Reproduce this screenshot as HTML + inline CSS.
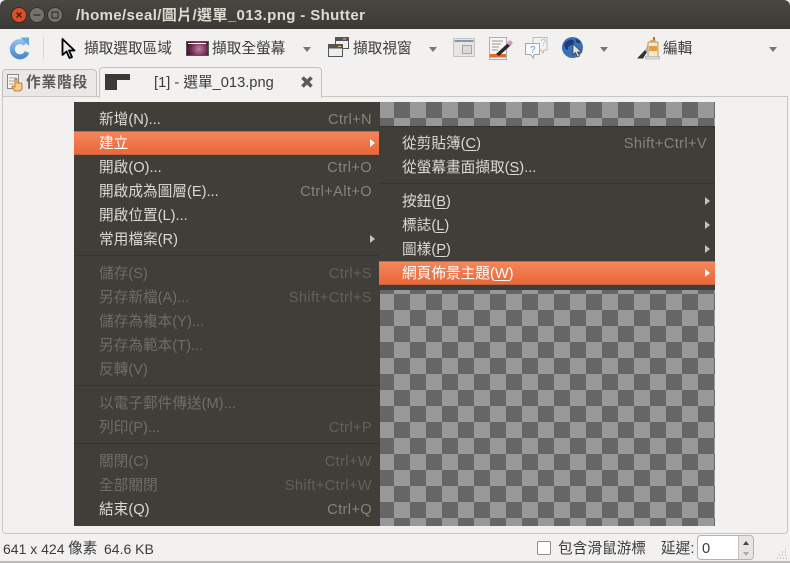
<!DOCTYPE html>
<html><head><meta charset="utf-8">
<style>
html,body{margin:0;padding:0;width:790px;height:563px;overflow:hidden;background:#f2f1f0}
body{position:relative;font-family:"Liberation Sans","WenQuanYi Zen Hei","Noto Sans CJK TC",sans-serif;font-size:14.67px;color:#3c3c3c}
.a{position:absolute;white-space:nowrap}
.tb{top:40px;line-height:18px;color:#3c3c3c}
.menu{background:#403e38;position:absolute}
.r{position:absolute;left:0;right:0;height:24px;line-height:26px;color:#dcd9d3;white-space:nowrap}
.r b{font-weight:normal;position:absolute;left:25px}
.r i{font-style:normal;position:absolute;right:8px;color:#85827b;letter-spacing:.35px}
.d b{color:#6f6c66}.d i{color:#63605a}
.h{background:linear-gradient(#f7855a,#e8683a);border-top:1px solid #c8623a;border-bottom:1px solid #c8623a;box-sizing:border-box;color:#fff}
.h b{color:#fff}
.ar{position:absolute;width:0;height:0;border-left:5px solid #c5c2bc;border-top:4px solid transparent;border-bottom:4px solid transparent;top:8px;right:5px}
.h .ar{border-left-color:#fff;top:7px}
.sep{position:absolute;left:0;right:0;height:1px;background:#36342f}
.dn{position:absolute;width:0;height:0;border-top:5px solid #777;border-left:4px solid transparent;border-right:4px solid transparent}
u{text-underline-offset:2px}
</style></head><body>

<!-- titlebar -->
<div class="a" style="left:0;top:0;width:790px;height:29px;background:linear-gradient(#494741,#3b3a35);border-radius:6px 6px 0 0"></div>
<svg class="a" style="left:10px;top:6px" width="56" height="18">
<circle cx="9" cy="9" r="7.5" fill="#d9502a" stroke="#4b2517"/><path d="M6.500 6.500l5 5M11.500 6.500l-5 5" stroke="#4a1a0c" stroke-width="1.400"/>
<circle cx="27" cy="9" r="7.500" fill="#74726a" stroke="#33322d"/><path d="M23.500 9h7" stroke="#33322d" stroke-width="1.400"/>
<circle cx="45" cy="9" r="7.500" fill="#74726a" stroke="#33322d"/><rect x="42" y="6" width="6" height="6" fill="none" stroke="#33322d" stroke-width="1.200"/>
</svg>
<div class="a" style="left:76px;top:6px;font-size:15px;line-height:19px;color:#dfdbd2;font-weight:bold;letter-spacing:.37px">/home/seal/圖片/選單_013.png - Shutter</div>

<!-- toolbar -->
<svg class="a" style="left:9px;top:36px" width="22" height="24" viewBox="0 0 22 24">
<defs><linearGradient id="g" x1="0" y1="0" x2="0" y2="1"><stop offset="0" stop-color="#8fbce8"/><stop offset="1" stop-color="#4a8ad0"/></linearGradient></defs>
<path d="M16.500 8A7.600 7.600 0 1 0 18 16" fill="none" stroke="url(#g)" stroke-width="5"/>
<path d="M11.500 1.500l8.500 0 0 8.500z" fill="#6aa5df"/>
</svg>
<div class="a" style="left:43px;top:37px;width:1px;height:22px;background:#d8d6d3"></div>
<svg class="a" style="left:61px;top:38px" width="16" height="22" viewBox="0 0 16 22">
<path d="M1.500 1v16l4-3.500 3 6.500 2.500-1-3-6.500h5.500z" fill="#e8e8e8" stroke="#000" stroke-width="1.800" stroke-linejoin="round"/>
</svg>
<div class="a tb" style="left:84px">擷取選取區域</div>
<div class="a" style="left:186px;top:41px;width:21px;height:13px;background:radial-gradient(circle at 12px 7px,#c080a0,#6b2a4c 60%,#2a1020);border:1px solid #555"></div>
<div class="a" style="left:188px;top:43px;width:18px;height:1px;background:#fff"></div>
<div class="a tb" style="left:212px">擷取全螢幕</div>
<div class="dn" style="left:303px;top:47px"></div>
<svg class="a" style="left:327px;top:36px" width="23" height="22" viewBox="0 0 23 22">
<rect x="8.500" y="1.500" width="13" height="11" fill="#eee" stroke="#555"/><rect x="8.500" y="1.500" width="13" height="3.500" fill="#555"/>
<rect x="1.500" y="8.500" width="14" height="12" fill="#eee" stroke="#555"/><rect x="1.500" y="8.500" width="14" height="4" fill="#555"/>
<path d="M11 10.500h3M16 3h3" stroke="#e8c060"/>
</svg>
<div class="a tb" style="left:353px">擷取視窗</div>
<div class="dn" style="left:429px;top:47px"></div>
<svg class="a" style="left:453px;top:38px" width="22" height="19" viewBox="0 0 22 19">
<rect x=".5" y=".5" width="21" height="18" rx="1" fill="#e6e5e2" stroke="#c4c3c0"/>
<rect x="1.500" y="2" width="19" height="2" fill="#7f97b8"/>
<rect x="9.500" y="7.500" width="9" height="8" fill="#dcdbd8" stroke="#a5a5a3"/>
</svg>
<svg class="a" style="left:489px;top:37px" width="24" height="23" viewBox="0 0 24 23">
<rect x=".5" y=".5" width="17" height="22" fill="#f6f5f2" stroke="#b0aea8"/>
<path d="M3 4h11M3 7h9M3 10h7M3 13h6" stroke="#777" stroke-width=".8"/>
<rect x="1" y="17" width="16" height="3.500" fill="#e8662e"/>
<path d="M7 17L19 6l2.500 2.500L10 19z" fill="#2a2a28"/>
<circle cx="21" cy="6" r="2.500" fill="#d89ac4"/>
</svg>
<svg class="a" style="left:525px;top:37px" width="23" height="22" viewBox="0 0 23 22">
<path d="M8 .5h14v12.500h-3l-1 3-2-3H8z" fill="#f2f2f0" stroke="#bdbcb8"/>
<path d="M.5 6.500h14v11H9l-.5 3.500-3-3.500h-5z" fill="#fbfbfa" stroke="#a9a8a4"/>
<text x="5" y="16" font-size="10" fill="#5b9bd9" font-family="Liberation Sans">?</text>
<text x="15.500" y="9" font-size="10" fill="#9cc3e8" font-family="Liberation Sans">?</text>
</svg>
<svg class="a" style="left:561px;top:36px" width="24" height="24" viewBox="0 0 24 24">
<circle cx="11.500" cy="11.500" r="10.500" fill="#3a70b8"/>
<path d="M3 8q5-6 9-4 3 2-1 5-5 1-4 5-3 0-4-6zM14 14q4-2 6 0-2 5-5 5zM14 3q4 0 6 4l-4 0z" fill="#1a3f78"/>
<path d="M12 8v11l2.500-2.500 2 4.500 2-1-2-4h4z" fill="#e2e2e2" stroke="#444" stroke-width=".8"/>
</svg>
<div class="dn" style="left:600px;top:47px"></div>
<svg class="a" style="left:636px;top:36px" width="24" height="24" viewBox="0 0 24 24">
<path d="M1 22.500L9 14l2 2-4 6.500z" fill="#333"/><path d="M9 14l3-6 1 1-2 7z" fill="#bbb"/>
<rect x="12" y="6" width="10" height="15" rx="1" fill="#efe8d8" stroke="#b59a60"/>
<rect x="13" y="10" width="8" height="5" fill="#ee9a3c"/>
<path d="M13 6l2-2h4l2 2z" fill="#d9a040"/>
<rect x="9.500" y="20.500" width="14" height="2.500" fill="#ddd" stroke="#999" stroke-width=".5"/>
<path d="M18 4V1" stroke="#c8662e" stroke-width="2"/>
</svg>
<div class="a tb" style="left:663px">編輯</div>
<div class="dn" style="left:769px;top:47px"></div>

<!-- tabs -->
<div class="a" style="left:2px;top:69px;width:95px;height:28px;background:#e9e8e6;border:1px solid #c4c2be;border-bottom:0;border-radius:4px 4px 0 0;box-sizing:border-box"></div>
<svg class="a" style="left:7px;top:74px" width="18" height="18" viewBox="0 0 18 18">
<rect x=".5" y=".5" width="11" height="14" fill="#f4f3f0" stroke="#8a8986"/>
<path d="M2 4h8M2 7h8M2 10h5" stroke="#aaa"/>
<path d="M8 9v-4l2 0v4h4q1 0 1 2v4l-2 2h-5l-3-4 1-1 2 1z" fill="#f5d08a" stroke="#c8762a"/>
</svg>
<div class="a" style="left:26px;top:74px;font-weight:bold;font-size:14.67px;line-height:19px;color:#5b5a57;letter-spacing:.9px">作業階段</div>
<div class="a" style="left:2px;top:96px;width:786px;height:438px;background:#f2f1f0;border:1px solid #c9c7c3;border-radius:0 0 4px 4px;box-sizing:border-box"></div>
<div class="a" style="left:99px;top:67px;width:223px;height:31px;background:#f2f1f0;border:1px solid #c4c2be;border-bottom:0;border-radius:4px 4px 0 0;box-sizing:border-box"></div>
<div class="a" style="left:105px;top:74px;width:25px;height:6px;background:#3c3a35"></div>
<div class="a" style="left:105px;top:74px;width:12px;height:16px;background:#3c3a35"></div>
<div class="a" style="left:154px;top:74px;line-height:19px;color:#3c3c3c">[1] - 選單_013.png</div>
<svg class="a" style="left:300px;top:75px" width="14" height="14" viewBox="0 0 14 14"><path d="M2.500 2.500l9 9M11.500 2.500l-9 9" stroke="#5a5a58" stroke-width="3.600"/></svg>

<!-- canvas -->
<div class="a" style="left:74px;top:102px;width:641px;height:424px;background-color:#666;background-image:conic-gradient(#999 25%,#666 0 50%,#999 0 75%,#666 0);background-size:32px 32px;background-position:0 0"></div>

<!-- main menu -->
<div class="menu" style="left:74px;top:102px;width:306px;height:424px">
<div class="r" style="top:5px"><b>新增(N)...</b><i>Ctrl+N</i></div>
<div class="r h" style="top:29px;line-height:24px"><b>建立</b><span class="ar"></span></div>
<div class="r" style="top:53px"><b>開啟(O)...</b><i>Ctrl+O</i></div>
<div class="r" style="top:77px"><b>開啟成為圖層(E)...</b><i>Ctrl+Alt+O</i></div>
<div class="r" style="top:101px"><b>開啟位置(L)...</b></div>
<div class="r" style="top:125px"><b>常用檔案(R)</b><span class="ar"></span></div>
<div class="sep" style="top:153px"></div>
<div class="r d" style="top:159px"><b>儲存(S)</b><i>Ctrl+S</i></div>
<div class="r d" style="top:183px"><b>另存新檔(A)...</b><i>Shift+Ctrl+S</i></div>
<div class="r d" style="top:207px"><b>儲存為複本(Y)...</b></div>
<div class="r d" style="top:231px"><b>另存為範本(T)...</b></div>
<div class="r d" style="top:255px"><b>反轉(V)</b></div>
<div class="sep" style="top:283px"></div>
<div class="r d" style="top:289px"><b>以電子郵件傳送(M)...</b></div>
<div class="r d" style="top:313px"><b>列印(P)...</b><i>Ctrl+P</i></div>
<div class="sep" style="top:341px"></div>
<div class="r d" style="top:347px"><b>關閉(C)</b><i>Ctrl+W</i></div>
<div class="r d" style="top:371px"><b>全部關閉</b><i>Shift+Ctrl+W</i></div>
<div class="r" style="top:395px"><b>結束(Q)</b><i>Ctrl+Q</i></div>
</div>

<!-- sub menu -->
<div class="menu" style="left:379px;top:126px;width:336px;height:164px;border-top:1px solid #33312c;box-sizing:border-box">
<div class="r" style="top:4px"><b style="left:23px">從剪貼簿(<u>C</u>)</b><i>Shift+Ctrl+V</i></div>
<div class="r" style="top:28px"><b style="left:23px">從螢幕畫面擷取(<u>S</u>)...</b></div>
<div class="sep" style="top:56px"></div>
<div class="r" style="top:62px"><b style="left:23px">按鈕(<u>B</u>)</b><span class="ar"></span></div>
<div class="r" style="top:86px"><b style="left:23px">標誌(<u>L</u>)</b><span class="ar"></span></div>
<div class="r" style="top:110px"><b style="left:23px">圖樣(<u>P</u>)</b><span class="ar"></span></div>
<div class="r h" style="top:134px;line-height:24px"><b style="left:23px">網頁佈景主題(<u>W</u>)</b><span class="ar"></span></div>
</div>

<!-- status bar -->
<div class="a" style="left:3px;top:540px;line-height:18px;font-size:14px">641 x 424</div>
<div class="a" style="left:68px;top:540px;line-height:18px">像素</div>
<div class="a" style="left:104px;top:540px;line-height:18px;font-size:14px">64.6 KB</div>
<div class="a" style="left:537px;top:541px;width:12px;height:12px;background:#fff;border:1px solid #8f8e8a;border-radius:2px"></div>
<div class="a" style="left:558px;top:540px;line-height:18px">包含滑鼠游標</div>
<div class="a" style="left:661px;top:540px;line-height:18px">延遲:</div>
<div class="a" style="left:697px;top:535px;width:57px;height:25px;background:#fff;border:1px solid #b5b3af;border-radius:4px;box-sizing:border-box"></div>
<div class="a" style="left:738px;top:536px;width:15px;height:23px;background:#e6e5e3;border-left:1px solid #c4c2be;border-radius:0 3px 3px 0;box-sizing:border-box"></div>
<div class="a" style="left:743px;top:541px;width:0;height:0;border-bottom:4px solid #444;border-left:3px solid transparent;border-right:3px solid transparent"></div>
<div class="a" style="left:743px;top:552px;width:0;height:0;border-top:4px solid #aaa;border-left:3px solid transparent;border-right:3px solid transparent"></div>
<div class="a" style="left:702px;top:540px;line-height:18px">0</div>
<svg class="a" style="left:776px;top:548px" width="12" height="12"><path d="M9 1h1M6 4h1M9 4h1M3 7h1M6 7h1M9 7h1M1 10h1M4 10h1M7 10h1M10 10h1" stroke="#a8a6a2"/></svg>
<div class="a" style="left:0;top:561px;width:790px;height:2px;background:#bdbbb7"></div>
</body></html>
